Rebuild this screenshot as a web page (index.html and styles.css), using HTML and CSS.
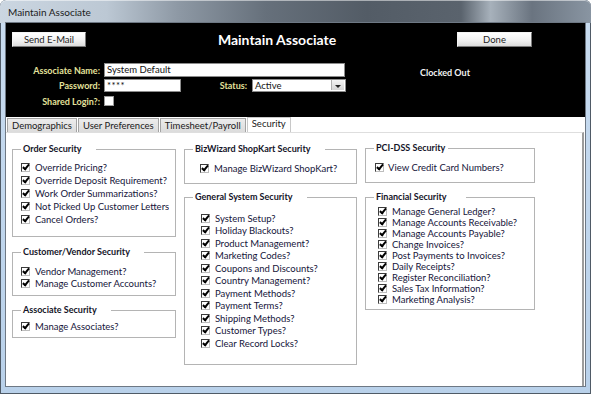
FILE: index.html
```html
<!DOCTYPE html>
<html lang="en">
  <head>
    <meta charset="UTF-8" />
    <title>Maintain Associate</title>
    <link rel="stylesheet" href="styles.css">
  </head>
  <body>
    <div class="window">
      <div class="titlebar">Maintain Associate</div>

      <div class="client">
        <div class="header">
          <div class="top-row">
            <button class="btn">Send E-Mail</button>
            <h1 class="form-title">Maintain Associate</h1>
            <button class="btn">Done</button>
          </div>

          <div class="fields">
            <div class="field-row row-name">
              <label class="lbl">Associate Name:</label>
              <div class="textbox name-box">System Default</div>
              <span class="clock">Clocked Out</span>
            </div>
            <div class="field-row row-pass">
              <label class="lbl">Password:</label>
              <div class="textbox pass-box">****</div>
              <label class="lbl status-lbl">Status:</label>
              <div class="textbox combo">
                <span>Active</span>
                <span class="combo-btn"></span>
              </div>
            </div>
            <div class="field-row row-shared">
              <label class="lbl">Shared Login?:</label>
              <span class="shared-cb"></span>
            </div>
          </div>
        </div>

        <div class="tabs">
          <div class="tab">Demographics</div>
          <div class="tab">User Preferences</div>
          <div class="tab">Timesheet/Payroll</div>
          <div class="tab active">Security</div>
        </div>

        <div class="page">
          <div class="col">
            <fieldset class="group order">
              <legend>Order Security</legend>
              <div class="item"><span class="cb"></span>Override Pricing?</div>
              <div class="item"><span class="cb"></span>Override Deposit Requirement?</div>
              <div class="item"><span class="cb"></span>Work Order Summarizations?</div>
              <div class="item"><span class="cb"></span>Not Picked Up Customer Letters?</div>
              <div class="item"><span class="cb"></span>Cancel Orders?</div>
            </fieldset>

            <fieldset class="group customer">
              <legend>Customer/Vendor Security</legend>
              <div class="item"><span class="cb"></span>Vendor Management?</div>
              <div class="item"><span class="cb"></span>Manage Customer Accounts?</div>
            </fieldset>

            <fieldset class="group associate">
              <legend>Associate Security</legend>
              <div class="item"><span class="cb"></span>Manage Associates?</div>
            </fieldset>
          </div>

          <div class="col">
            <fieldset class="group shopkart">
              <legend>BizWizard ShopKart Security</legend>
              <div class="item"><span class="cb"></span>Manage BizWizard ShopKart?</div>
            </fieldset>

            <fieldset class="group general">
              <legend>General System Security</legend>
              <div class="item"><span class="cb"></span>System Setup?</div>
              <div class="item"><span class="cb"></span>Holiday Blackouts?</div>
              <div class="item"><span class="cb"></span>Product Management?</div>
              <div class="item"><span class="cb"></span>Marketing Codes?</div>
              <div class="item"><span class="cb"></span>Coupons and Discounts?</div>
              <div class="item"><span class="cb"></span>Country Management?</div>
              <div class="item"><span class="cb"></span>Payment Methods?</div>
              <div class="item"><span class="cb"></span>Payment Terms?</div>
              <div class="item"><span class="cb"></span>Shipping Methods?</div>
              <div class="item"><span class="cb"></span>Customer Types?</div>
              <div class="item"><span class="cb"></span>Clear Record Locks?</div>
            </fieldset>
          </div>

          <div class="col">
            <fieldset class="group pci">
              <legend>PCI-DSS Security</legend>
              <div class="item"><span class="cb"></span>View Credit Card Numbers?</div>
            </fieldset>

            <fieldset class="group financial">
              <legend>Financial Security</legend>
              <div class="item"><span class="cb"></span>Manage General Ledger?</div>
              <div class="item"><span class="cb"></span>Manage Accounts Receivable?</div>
              <div class="item"><span class="cb"></span>Manage Accounts Payable?</div>
              <div class="item"><span class="cb"></span>Change Invoices?</div>
              <div class="item"><span class="cb"></span>Post Payments to Invoices?</div>
              <div class="item"><span class="cb"></span>Daily Receipts?</div>
              <div class="item"><span class="cb"></span>Register Reconciliation?</div>
              <div class="item"><span class="cb"></span>Sales Tax Information?</div>
              <div class="item"><span class="cb"></span>Marketing Analysis?</div>
            </fieldset>
          </div>
        </div>
      </div>
    </div>
  </body>
</html>
```

FILE: styles.css
```css
body {
  margin: 0;
  padding: 0;
  font-family: "Lato", "Liberation Sans", sans-serif;
  background: #ffffff;
}

.window {
  width: 591px;
  height: 394px;
  box-sizing: border-box;
  display: flex;
  flex-direction: column;
  background: linear-gradient(180deg, #c9dcf0, #b9d1ea);
  border-radius: 6px 6px 0 0;
  box-shadow: inset 0 0 0 1px #4f5a66;
  overflow: hidden;
}

.titlebar {
  height: 23px;
  line-height: 24px;
  padding-left: 8px;
  font-size: 10px;
  color: #1b1b1b;
  background: linear-gradient(90deg, #cbd6e1 0%, #bcc8d4 18%, #8e99a5 30%, #66707b 45%, #535c66 62%, #5a636d 78%, #a7b1bb 83%, #6a7480 90%, #8995a2 100%);
  border-radius: 6px 6px 0 0;
  box-shadow: inset 0 1px 0 rgba(255, 255, 255, 0.5);
}

.client {
  flex: 1;
  margin: 0 6px 8px 6px;
  background: #ffffff;
  display: flex;
  flex-direction: column;
  box-shadow: 0 0 0 1px #6e7884;
}

/* black form header */

.header {
  height: 94px;
  box-sizing: border-box;
  padding-top: 9px;
  background: #000000;
}

.top-row {
  display: grid;
  grid-template-columns: 74px 371px 75px;
  margin-left: 6px;
  height: 15px;
}

.btn {
  height: 15px;
  padding: 0;
  font-family: inherit;
  font-size: 9.5px;
  color: #1c1c1c;
  background: linear-gradient(180deg, #ffffff, #f0f0f0 60%, #dcdcdc);
  border: 1px solid #f4f4f4;
  border-right-color: #7a7a7a;
  border-bottom-color: #7a7a7a;
}

.form-title {
  margin: 0;
  padding-left: 11px;
  text-align: center;
  font-size: 14px;
  line-height: 15px;
  font-weight: bold;
  color: #ffffff;
}

.fields {
  margin-top: 16px;
}

.field-row {
  display: flex;
  align-items: center;
}

.row-name {
  height: 14px;
}

.row-pass {
  height: 13px;
  margin-top: 2px;
}

.row-shared {
  height: 10px;
  margin-top: 4px;
}

.lbl {
  width: 94px;
  margin-right: 4px;
  text-align: right;
  font-size: 9px;
  font-weight: bold;
  color: #e4e29c;
}

.status-lbl {
  width: 66px;
  margin-right: 5px;
}

.textbox {
  height: 100%;
  box-sizing: border-box;
  padding-left: 2px;
  font-size: 9.5px;
  line-height: 12px;
  color: #111111;
  background: #ffffff;
  border: 1px solid #8c8c8c;
}

.name-box {
  width: 241px;
}

.pass-box {
  width: 77px;
  letter-spacing: 0.5px;
}

.combo {
  width: 94px;
  display: flex;
  justify-content: space-between;
}

.combo-btn {
  width: 12px;
  height: 10px;
  margin: 0 1px 0 0;
  background: linear-gradient(180deg, #f4f4f4, #d4d4d4);
  border-left: 1px solid #b0b0b0;
  display: flex;
  align-items: center;
  justify-content: center;
}

.combo-btn::after {
  content: "";
  margin-top: 3px;
  border-left: 3px solid transparent;
  border-right: 3px solid transparent;
  border-top: 3px solid #222222;
}

.clock {
  margin-left: 75px;
  margin-top: 4px;
  font-size: 9px;
  font-weight: bold;
  color: #f2f2f2;
}

.shared-cb {
  width: 10px;
  height: 10px;
  box-sizing: border-box;
  background: #ffffff;
  border: 1px solid #9a9a9a;
}

/* tab strip */

.tabs {
  height: 15px;
  display: flex;
  align-items: flex-end;
  padding-left: 1px;
}

.tab {
  height: 14px;
  box-sizing: border-box;
  padding: 0 4px;
  margin-right: 1px;
  font-size: 9.5px;
  line-height: 13px;
  color: #1a1a1a;
  background: linear-gradient(180deg, #ececec, #dcdcdc);
  border: 1px solid #a3a3a3;
  border-bottom: none;
}

.tab.active {
  height: 15px;
  line-height: 11px;
  margin-right: 0;
  background: #ffffff;
  border-color: #c8c8c8;
}

/* security page */

.page {
  flex: 1;
  display: grid;
  grid-template-columns: 164px 173px 170px;
  column-gap: 8px;
  align-items: start;
  padding: 10px 0 0 6px;
  border-top: 1px solid #dedede;
  border-right: 2px solid #9c9c9c;
  margin-right: 1px;
}

.col {
  display: flex;
  flex-direction: column;
}

.group {
  margin: 0;
  padding: 6px 6px 10px 8px;
  border: 1px solid #b4b4b4;
  min-width: 0;
}

.group legend {
  padding: 0 14px 0 2px;
  font-size: 9px;
  line-height: 12px;
  font-weight: bold;
  color: #141428;
}

.item {
  display: flex;
  align-items: center;
  gap: 5px;
  height: 13px;
  font-size: 9.5px;
  color: #15153a;
  white-space: nowrap;
  overflow: hidden;
}

.cb {
  position: relative;
  flex: none;
  width: 9px;
  height: 9px;
  box-sizing: border-box;
  background: #ffffff;
  border: 1px solid #3c3c3c;
  border-right-color: #bdbdbd;
  border-bottom-color: #bdbdbd;
}

.cb::after {
  content: "";
  position: absolute;
  left: 2px;
  top: -1px;
  width: 2px;
  height: 5px;
  border-right: 2px solid #000000;
  border-bottom: 2px solid #000000;
  transform: rotate(40deg);
}

.customer {
  margin-top: 9px;
  padding-top: 7px;
  padding-bottom: 6px;
}

.customer .item,
.associate .item {
  height: 12px;
}

.associate {
  margin-top: 8px;
  padding-top: 4px;
  padding-bottom: 5px;
}

.shopkart {
  padding-top: 7px;
  padding-bottom: 9px;
}

.shopkart .item {
  height: 12px;
  margin-left: 7px;
}

.general {
  margin-top: 7px;
  padding-top: 9px;
  padding-bottom: 14px;
}

.general .item {
  height: 12.5px;
  margin-left: 8px;
}

.pci {
  margin-top: -1px;
  padding-top: 7px;
  padding-bottom: 9px;
}

.pci legend {
  padding-right: 3px;
}

.pci .item {
  height: 12px;
  margin-left: 1px;
  gap: 4px;
}

.financial {
  margin-top: 8px;
  padding-top: 3px;
  padding-bottom: 4px;
}

.financial legend {
  padding-right: 19px;
}

.financial .item {
  height: 11px;
  margin-left: 4px;
}
```
